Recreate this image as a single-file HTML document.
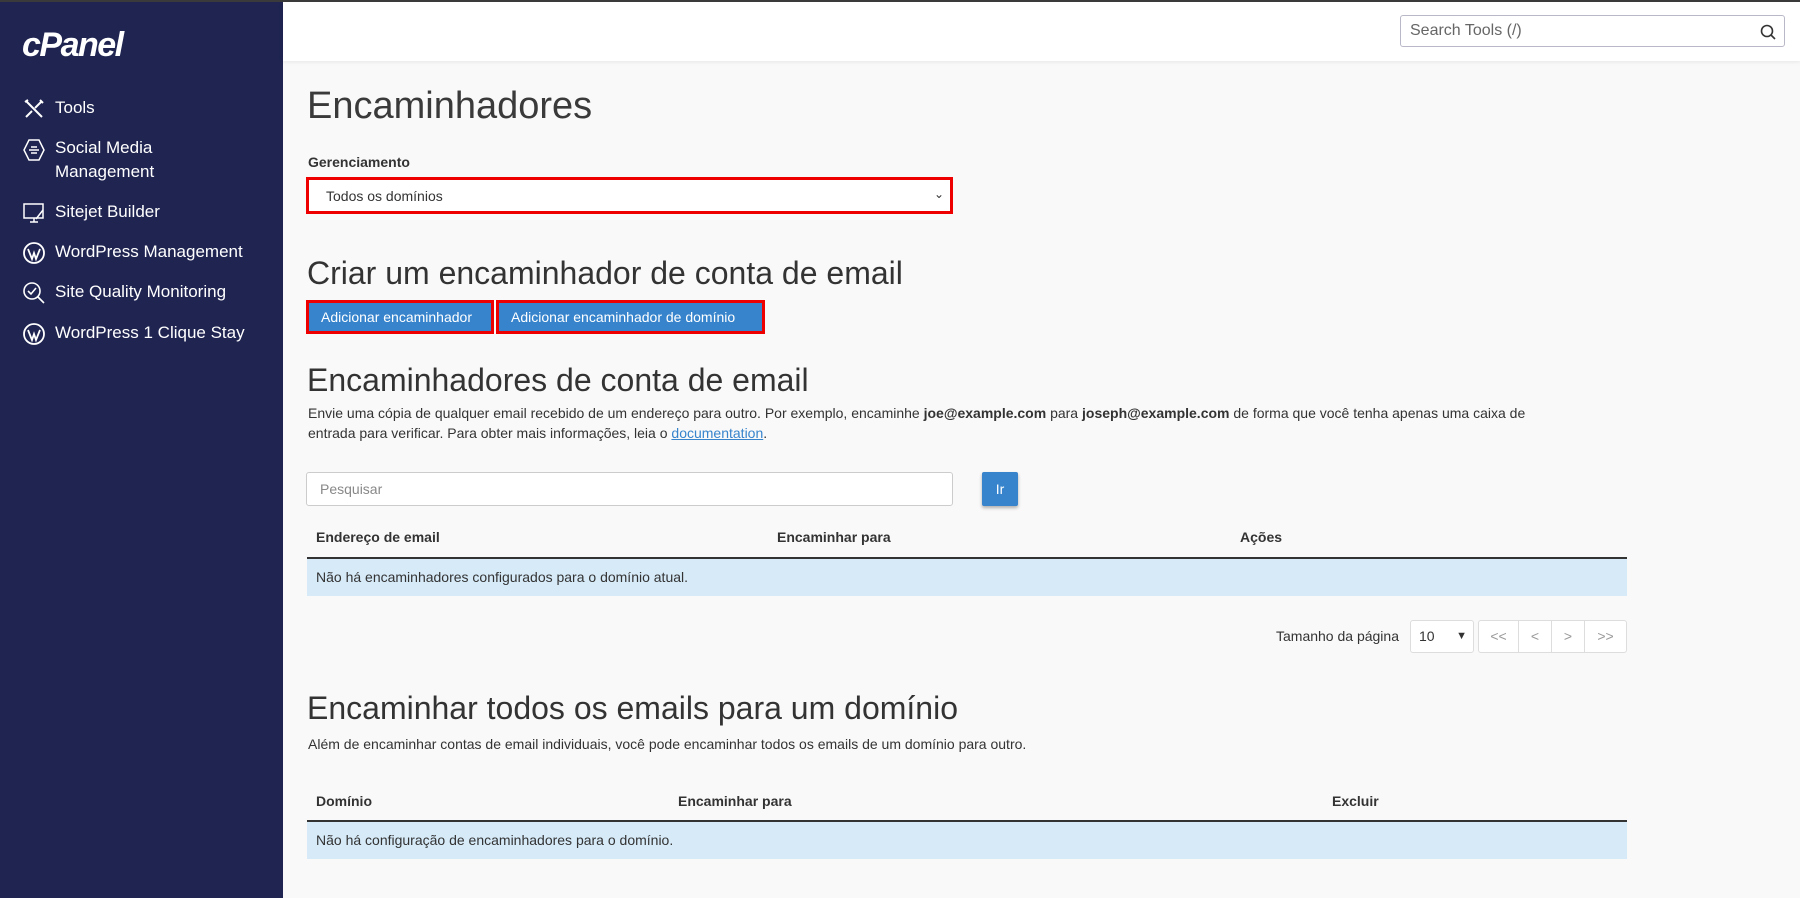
<!DOCTYPE html>
<html><head><meta charset="utf-8"><style>
*{box-sizing:border-box;margin:0;padding:0}
body{width:1800px;height:898px;overflow:hidden;background:#f9f9f9;font-family:"Liberation Sans",sans-serif;color:#333;position:relative}
.topline{position:absolute;left:0;top:0;width:1800px;height:2px;background:#3a3a3a;z-index:5}
.side{position:absolute;left:0;top:0;width:283px;height:898px;background:#1f2451;color:#fff}
.logo{position:absolute;left:22px;top:26px;font-size:34px;font-weight:bold;font-style:italic;letter-spacing:-1.5px;color:#fff}
.item{position:absolute;left:55px;font-size:17px;line-height:24px;color:#fff}
.ic{position:absolute;left:22px;width:24px;height:24px}
.hdr{position:absolute;left:283px;top:0;width:1517px;height:61px;background:#fff;box-shadow:0 1px 4px rgba(0,0,0,.08)}
.search{position:absolute;left:1400px;top:15px;width:385px;height:32px;border:1px solid #b8b8c8;border-radius:3px;background:#fff;font-size:16px;color:#666;padding:0 9px;line-height:30px}
.abs{position:absolute}
h1{position:absolute;left:307px;top:85px;font-size:38px;font-weight:normal;color:#3a3a3a}
h2{position:absolute;left:307px;font-size:32px;font-weight:normal;color:#333}
.lbl{position:absolute;left:308px;top:154px;font-size:14px;font-weight:bold}
.sel{position:absolute;left:306px;top:177px;width:647px;height:37px;border:3px solid #e00;background:#fff;font-size:14px;padding:8px 17px;color:#333}
.btn{position:absolute;top:300px;height:34px;border:3px solid #e00;background:#3784cc;color:#fff;font-size:14px;padding:6px 12px;white-space:nowrap}
p{position:absolute;left:308px;font-size:14px;line-height:20px;color:#333;width:1240px}
a{color:#3784cc;text-decoration:underline}
.inp{position:absolute;left:306px;top:472px;width:647px;height:34px;border:1px solid #ccc;border-radius:3px;background:#fff;font-size:14px;color:#888;padding:8px 13px}
.ir{position:absolute;left:982px;top:472px;width:36px;height:34px;background:#3784cc;color:#fff;font-size:14px;text-align:center;line-height:34px;border-radius:2px;box-shadow:0 2px 3px rgba(0,0,0,.3)}
.th{position:absolute;font-size:14px;font-weight:bold}
.tl{position:absolute;left:307px;width:1320px;height:2px;background:#333}
.row{position:absolute;left:307px;width:1320px;height:37px;background:#d6eaf8;font-size:14px;padding:10px 9px}
.pg{position:absolute;top:620px;height:33px;border:1px solid #ddd;background:#fff;color:#999;font-size:14px;text-align:center;line-height:31px}
</style></head><body>
<div class="topline"></div>
<div class="side">
<div class="logo">cPanel</div>
<svg class="ic" style="top:97px" viewBox="0 0 24 24" fill="none" stroke="#fff" stroke-width="2"><path d="M4 4l16 16M20 4l-7 7M4 20l6-6M3 5l3-2M18 3l3 3"/></svg>
<div class="item" style="top:96px">Tools</div>
<svg class="ic" style="top:138px" viewBox="0 0 24 24" fill="none" stroke="#fff" stroke-width="1.5"><path d="M7 2h10l5 10-5 10H7L2 12z"/><path d="M7 12h10M9 9h6M9 15h6"/></svg>
<div class="item" style="top:136px">Social Media<br>Management</div>
<svg class="ic" style="top:201px" viewBox="0 0 24 24" fill="none" stroke="#fff" stroke-width="1.5"><rect x="2" y="3" width="19" height="14"/><path d="M8 21h8M12 17v4M14 18l7-9"/></svg>
<div class="item" style="top:200px">Sitejet Builder</div>
<svg class="ic" style="top:241px" viewBox="0 0 24 24" fill="none" stroke="#fff" stroke-width="1.8"><circle cx="12" cy="12" r="10"/><path d="M6 8l4 10 2-6 2 6 4-10"/></svg>
<div class="item" style="top:240px">WordPress Management</div>
<svg class="ic" style="top:281px" viewBox="0 0 24 24" fill="none" stroke="#fff" stroke-width="1.6"><circle cx="10" cy="10" r="8"/><path d="M6 10l3 3 5-6M16 16l6 6"/></svg>
<div class="item" style="top:280px">Site Quality Monitoring</div>
<svg class="ic" style="top:322px" viewBox="0 0 24 24" fill="none" stroke="#fff" stroke-width="1.8"><circle cx="12" cy="12" r="10"/><path d="M6 8l4 10 2-6 2 6 4-10"/></svg>
<div class="item" style="top:321px">WordPress 1 Clique Stay</div>
</div>
<div class="hdr"></div>
<div class="search">Search Tools (/)<svg style="position:absolute;right:8px;top:8px" width="16" height="16" viewBox="0 0 16 16" fill="none" stroke="#333" stroke-width="1.6"><circle cx="7" cy="7" r="5.5"/><path d="M11 11l4 4"/></svg></div>
<h1>Encaminhadores</h1>
<div class="lbl">Gerenciamento</div>
<div class="sel">Todos os domínios<span style="position:absolute;right:6px;top:7px;font-size:12px">&#8964;</span></div>
<h2 style="top:255px">Criar um encaminhador de conta de email</h2>
<div class="btn" style="left:306px;width:188px">Adicionar encaminhador</div>
<div class="btn" style="left:496px;width:269px">Adicionar encaminhador de domínio</div>
<h2 style="top:362px">Encaminhadores de conta de email</h2>
<p style="top:403px">Envie uma cópia de qualquer email recebido de um endereço para outro. Por exemplo, encaminhe <b>joe@example.com</b> para <b>joseph@example.com</b> de forma que você tenha apenas uma caixa de entrada para verificar. Para obter mais informações, leia o <a>documentation</a>.</p>
<div class="inp">Pesquisar</div>
<div class="ir">Ir</div>
<div class="th" style="left:316px;top:529px">Endereço de email</div>
<div class="th" style="left:777px;top:529px">Encaminhar para</div>
<div class="th" style="left:1240px;top:529px">Ações</div>
<div class="tl" style="top:557px"></div>
<div class="row" style="top:559px">Não há encaminhadores configurados para o domínio atual.</div>
<div class="abs" style="left:1276px;top:628px;font-size:14px">Tamanho da página</div>
<div class="pg" style="left:1410px;width:64px;border-radius:3px;color:#333;text-align:left;padding-left:8px">10<span style="position:absolute;right:6px;top:0;font-size:11px">&#9660;</span></div>
<div class="pg" style="left:1478px;width:41px;border-radius:3px 0 0 3px">&lt;&lt;</div>
<div class="pg" style="left:1518px;width:34px">&lt;</div>
<div class="pg" style="left:1551px;width:34px">&gt;</div>
<div class="pg" style="left:1584px;width:43px;border-radius:0 3px 3px 0">&gt;&gt;</div>
<h2 style="top:690px">Encaminhar todos os emails para um domínio</h2>
<p style="top:734px">Além de encaminhar contas de email individuais, você pode encaminhar todos os emails de um domínio para outro.</p>
<div class="th" style="left:316px;top:793px">Domínio</div>
<div class="th" style="left:678px;top:793px">Encaminhar para</div>
<div class="th" style="left:1332px;top:793px">Excluir</div>
<div class="tl" style="top:820px"></div>
<div class="row" style="top:822px">Não há configuração de encaminhadores para o domínio.</div>
</body></html>
